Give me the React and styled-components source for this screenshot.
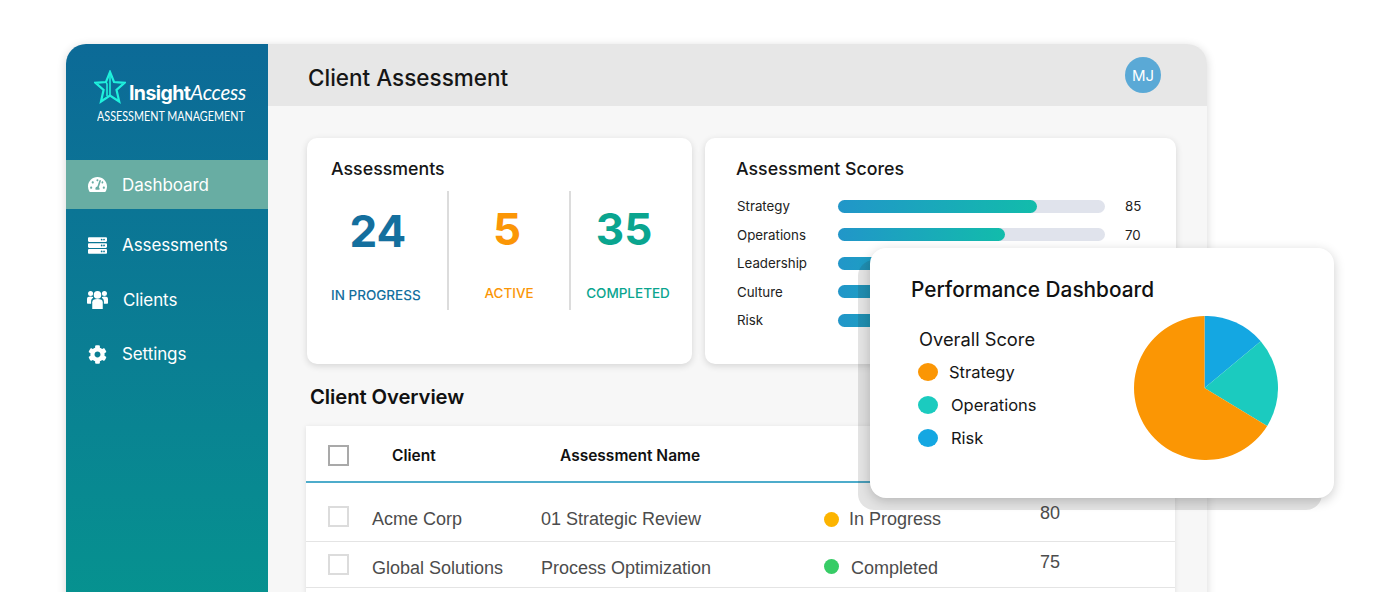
import React from "react";
import styled, { createGlobalStyle } from "styled-components";
import { FaTachometerAlt, FaServer, FaCog } from "react-icons/fa";

const GlobalStyle = createGlobalStyle`
  html, body {
    margin: 0;
    background: #fff;
    font-family: "Inter", "Liberation Sans", sans-serif;
  }
`;

const Page = styled.div`
  position: relative;
  width: 1394px;
  height: 592px;
  padding: 44px 0 0 66px;
  box-sizing: border-box;
  overflow: hidden;
`;

const AppWindow = styled.div`
  display: flex;
  width: 1141px;
  height: 640px;
  border-radius: 20px 20px 0 0;
  overflow: hidden;
  background: #f7f7f7;
  box-shadow: 0 2px 10px rgba(0, 0, 0, 0.16);
`;

const Sidebar = styled.aside`
  width: 202px;
  flex: none;
  color: #fff;
  background: linear-gradient(180deg, #0c6a97 0%, #0a7f93 50%, #05998e 100%);
`;

const Brand = styled.div`
  height: 116px;
  box-sizing: border-box;
  padding: 26px 0 0 28px;
`;

const BrandTop = styled.div`
  display: flex;
  align-items: flex-end;
  height: 34px;
`;

const BrandName = styled.div`
  font-size: 19.5px;
  line-height: 24px;
  margin: 0 0 -1px 3px;
  letter-spacing: -0.6px;
  b {
    font-weight: 700;
  }
  i {
    font-family: "Lato", sans-serif;
    font-weight: 400;
    letter-spacing: -0.2px;
    font-size: 20.5px;
  }
`;

const BrandSub = styled.div`
  font-family: "Lato", sans-serif;
  font-size: 14px;
  line-height: 16px;
  margin: 4px 0 0 3px;
  white-space: nowrap;
  transform: scaleX(0.77);
  transform-origin: left center;
`;

const NavItem = styled.div`
  display: flex;
  align-items: center;
  gap: 15px;
  height: ${(p) => (p.$active ? "49px" : "54.5px")};
  padding-left: 22px;
  margin-bottom: ${(p) => (p.$active ? "9px" : "0")};
  font-size: 17px;
  letter-spacing: -0.1px;
  background: ${(p) => (p.$active ? "#68ada3" : "transparent")};
  svg {
    width: 19px;
    height: 19px;
    flex: none;
  }
`;

const Main = styled.main`
  flex: 1;
  min-width: 0;
`;

const TopBar = styled.header`
  display: flex;
  align-items: center;
  justify-content: space-between;
  height: 62px;
  padding: 0 46px 0 40px;
  background: #e7e7e7;
`;

const PageTitle = styled.h1`
  margin: 4px 0 0;
  font-size: 22.5px;
  font-weight: 500;
  color: #161616;
`;

const Avatar = styled.div`
  display: flex;
  align-items: center;
  justify-content: center;
  width: 36px;
  height: 36px;
  border-radius: 50%;
  font-size: 15px;
  color: #fff;
  background: #5aa9d6;
`;

const Content = styled.div`
  padding: 32px 32px 0 38px;
`;

const Cards = styled.div`
  display: grid;
  grid-template-columns: 385px 471px;
  gap: 13px;
  padding-left: 1px;
`;

const Card = styled.section`
  height: 226px;
  box-sizing: border-box;
  border-radius: 10px;
  background: #fff;
  box-shadow: 0 2px 7px rgba(0, 0, 0, 0.14);
  padding: ${(p) => p.$padding};
`;

const CardTitle = styled.h2`
  margin: 0;
  font-size: 17.8px;
  line-height: 24px;
  font-weight: 500;
  color: #161616;
`;

const StatRow = styled.div`
  display: grid;
  grid-template-columns: 118px 122px 114px;
  margin-top: 10px;
  height: 119px;
`;

const Stat = styled.div`
  display: flex;
  flex-direction: column;
  align-items: ${(p) => p.$align || "center"};
  border-right: ${(p) => (p.$divider ? "2px solid #dcdcdc" : "none")};
  color: ${(p) => p.$color};
`;

const StatValue = styled.div`
  font-size: 44px;
  line-height: 56px;
  font-weight: 700;
  margin-top: ${(p) => p.$top};
  margin-right: ${(p) => p.$shift || "0"};
  width: ${(p) => p.$width || "auto"};
  text-align: center;
`;

const StatLabel = styled.div`
  font-size: 13.5px;
  line-height: 18px;
  font-weight: 500;
  margin-top: ${(p) => p.$top};
  white-space: nowrap;
`;

const ScoreRows = styled.div`
  margin-top: 11px;
  padding-left: 1px;
`;

const ScoreRow = styled.div`
  display: grid;
  grid-template-columns: 101px 267px 1fr;
  align-items: center;
  height: 28.5px;
  font-size: 13.3px;
  color: #222;
`;

const Track = styled.div`
  height: 13px;
  border-radius: 7px;
  background: #e0e3ec;
`;

const Fill = styled.div`
  height: 100%;
  border-radius: 7px;
  background: linear-gradient(90deg, #2196c9, #12bcab);
`;

const ScoreValue = styled.span`
  padding-left: 20px;
`;

const SectionTitle = styled.h2`
  margin: 20px 0 0 4px;
  font-size: 20.3px;
  line-height: 26px;
  font-weight: 600;
  letter-spacing: -0.1px;
  color: #111;
`;

const Table = styled.div`
  height: 300px;
  margin-top: 16px;
  background: #fff;
  box-shadow: 0 1px 5px rgba(0, 0, 0, 0.1);
`;

const HeadRow = styled.div`
  display: grid;
  grid-template-columns: 86px 168px 1fr;
  align-items: center;
  height: 57px;
  box-sizing: border-box;
  padding-top: 4px;
  border-bottom: 2px solid #4daccb;
  font-size: 15.5px;
  font-weight: 600;
  color: #111;
`;

const BodyRow = styled.div`
  display: grid;
  grid-template-columns: 66px 169px 283px 216px 1fr;
  align-items: center;
  height: ${(p) => p.$height};
  padding-top: ${(p) => p.$top};
  box-sizing: border-box;
  border-bottom: 1.5px solid #e4e4e4;
  font-family: "Liberation Sans", sans-serif;
  font-size: 18px;
  color: #4c4c4c;
`;

const Check = styled.span`
  display: block;
  box-sizing: border-box;
  width: 21px;
  height: 21px;
  margin-left: 22px;
  margin-bottom: ${(p) => p.$lift || "0"};
  border: ${(p) => (p.$head ? "2px solid #a9a9a9" : "2px solid #dcdcdc")};
`;

const Status = styled.div`
  display: flex;
  align-items: center;
  gap: ${(p) => p.$gap};
`;

const Dot = styled.span`
  width: 15px;
  height: 15px;
  border-radius: 50%;
  margin-bottom: ${(p) => p.$lift || "0"};
  background: ${(p) => p.$color};
`;

const Score = styled.span`
  padding-bottom: 12px;
`;

const PopupLayer = styled.div`
  position: absolute;
  inset: 0;
  isolation: isolate;
  pointer-events: none;
`;

const Popup = styled.div`
  position: absolute;
  left: 870px;
  top: 248px;
  width: 464px;
  height: 250px;
  box-sizing: border-box;
  padding: 28px 0 0 41px;
  border-radius: 16px;
  background: #fff;
  box-shadow: 0 3px 12px rgba(0, 0, 0, 0.2);
  &::before {
    content: "";
    position: absolute;
    left: -12px;
    top: 12px;
    width: 100%;
    height: 100%;
    border-radius: 16px;
    background: rgba(40, 40, 40, 0.13);
    z-index: -1;
  }
`;

const PopupTitle = styled.h2`
  margin: 0;
  font-size: 20.8px;
  line-height: 28px;
  font-weight: 500;
  color: #111;
`;

const PopupBody = styled.div`
  display: flex;
  justify-content: space-between;
  padding-right: 56px;
`;

const LegendTitle = styled.div`
  margin: 23px 0 0 8px;
  font-size: 18.3px;
  line-height: 24px;
  color: #161616;
`;

const Legend = styled.div`
  display: flex;
  flex-direction: column;
  margin-top: 4px;
`;

const LegendRow = styled.div`
  display: flex;
  align-items: center;
  gap: ${(p) => p.$gap};
  height: 33px;
  margin-left: 7px;
  font-size: 16.5px;
  color: #161616;
`;

const Swatch = styled.span`
  width: 20px;
  height: 18px;
  border-radius: 50%;
  background: ${(p) => p.$color};
`;

const PieChart = styled.svg`
  display: block;
  margin-top: 12px;
  flex: none;
`;

const scores = [
  { name: "Strategy", value: 85, pct: 74.5 },
  { name: "Operations", value: 70, pct: 62.5 },
  { name: "Leadership", value: "", pct: 62 },
  { name: "Culture", value: "", pct: 60 },
  { name: "Risk", value: "", pct: 55 },
];

const LogoStar = () => (
  <svg width="32" height="34" viewBox="0 0 32 34" fill="none" stroke="#1ff0dc" strokeWidth="2.2">
    <path d="M16 2 L20 12 L30.5 12.8 L22.5 19.8 L25.2 31.5 L16 25.5 L7 31.5 L9.6 19.8 L1.5 12.8 L12 12 Z" />
    <path d="M16 2 V25.5 M12 12 L13 14 V26" strokeWidth="1.6" />
  </svg>
);

const ClientsIcon = () => (
  <svg viewBox="0 0 20 20" fill="currentColor" style={{ width: 21, height: 21, marginLeft: -1 }}>
    <circle cx="10" cy="5.6" r="3.6" />
    <circle cx="3.4" cy="4.2" r="2.4" />
    <circle cx="16.6" cy="4.2" r="2.4" />
    <path d="M5 19 V12.5 C5 10.4 6.6 9.6 10 9.6 C13.4 9.6 15 10.4 15 12.5 V19 Z" />
    <path d="M0 13 V9.5 C0 7.8 1.2 7.2 3.4 7.2 C4.4 7.2 5.2 7.4 5.7 7.7 C6 8 5.9 8.6 5.4 8.9 C4.4 9.6 3.9 10.6 3.9 12 V14 H1 C0.4 14 0 13.6 0 13 Z" />
    <path d="M20 13 V9.5 C20 7.8 18.8 7.2 16.6 7.2 C15.6 7.2 14.8 7.4 14.3 7.7 C14 8 14.1 8.6 14.6 8.9 C15.6 9.6 16.1 10.6 16.1 12 V14 H19 C19.6 14 20 13.6 20 13 Z" />
  </svg>
);

const Sector = ({ from, to, color }) => {
  const point = (deg) => {
    if (deg === 0 || deg === 360) return "70.5 0";
    const rad = (deg * Math.PI) / 180;
    return `${72 + 72 * Math.sin(rad)} ${72 - 72 * Math.cos(rad)}`;
  };
  return (
    <path
      d={`M70.5 72 L${point(from)} A72 72 0 ${to - from > 180 ? 1 : 0} 1 ${point(to)} Z`}
      fill={color}
    />
  );
};

export default function App() {
  return (
    <Page>
      <GlobalStyle />
      <AppWindow>
        <Sidebar>
          <Brand>
            <BrandTop>
              <LogoStar />
              <BrandName>
                <b>Insight</b>
                <i>Access</i>
              </BrandName>
            </BrandTop>
            <BrandSub>ASSESSMENT MANAGEMENT</BrandSub>
          </Brand>
          <NavItem $active>
            <FaTachometerAlt />
            Dashboard
          </NavItem>
          <NavItem>
            <FaServer />
            Assessments
          </NavItem>
          <NavItem>
            <ClientsIcon />
            Clients
          </NavItem>
          <NavItem>
            <FaCog />
            Settings
          </NavItem>
        </Sidebar>
        <Main>
          <TopBar>
            <PageTitle>Client Assessment</PageTitle>
            <Avatar>MJ</Avatar>
          </TopBar>
          <Content>
            <Cards>
              <Card $padding="19px 0 0 24px">
                <CardTitle>Assessments</CardTitle>
                <StatRow>
                  <Stat $divider $color="#146f9e" $align="flex-start">
                    <StatValue $width="94px" $top="12px">24</StatValue>
                    <StatLabel $top="27px">IN PROGRESS</StatLabel>
                  </Stat>
                  <Stat $divider $color="#fb9606">
                    <StatValue $top="10px" $shift="4px">5</StatValue>
                    <StatLabel $top="27px">ACTIVE</StatLabel>
                  </Stat>
                  <Stat $color="#0aa58f">
                    <StatValue $top="10px" $shift="8px">35</StatValue>
                    <StatLabel $top="27px">COMPLETED</StatLabel>
                  </Stat>
                </StatRow>
              </Card>
              <Card $padding="19px 34px 0 31px">
                <CardTitle>Assessment Scores</CardTitle>
                <ScoreRows>
                  {scores.map((s) => (
                    <ScoreRow key={s.name}>
                      <span>{s.name}</span>
                      <Track>
                        <Fill style={{ width: `${s.pct}%` }} />
                      </Track>
                      <ScoreValue>{s.value}</ScoreValue>
                    </ScoreRow>
                  ))}
                </ScoreRows>
              </Card>
            </Cards>
            <SectionTitle>Client Overview</SectionTitle>
            <Table>
              <HeadRow>
                <Check $head />
                <span>Client</span>
                <span>Assessment Name</span>
              </HeadRow>
              <BodyRow $height="58.5px" $top="15px">
                <Check $lift="6px" />
                <span>Acme Corp</span>
                <span>01 Strategic Review</span>
                <Status $gap="10px">
                  <Dot $color="#fcb400" />
                  In Progress
                </Status>
                <Score>80</Score>
              </BodyRow>
              <BodyRow $height="46px" $top="8px">
                <Check $lift="8px" />
                <span>Global Solutions</span>
                <span>Process Optimization</span>
                <Status $gap="12px">
                  <Dot $color="#37cc66" $lift="4px" />
                  Completed
                </Status>
                <Score>75</Score>
              </BodyRow>
            </Table>
          </Content>
        </Main>
      </AppWindow>
      <PopupLayer>
        <Popup>
          <PopupTitle>Performance Dashboard</PopupTitle>
          <PopupBody>
            <div>
              <LegendTitle>Overall Score</LegendTitle>
              <Legend>
                <LegendRow $gap="11px">
                  <Swatch $color="#fb9604" />
                  Strategy
                </LegendRow>
                <LegendRow $gap="13px">
                  <Swatch $color="#1bcbbf" />
                  Operations
                </LegendRow>
                <LegendRow $gap="13px">
                  <Swatch $color="#14a7e2" />
                  Risk
                </LegendRow>
              </Legend>
            </div>
            <PieChart width="144" height="144" viewBox="0 0 144 144">
              <Sector from={0} to={49.5} color="#14a7e2" />
              <Sector from={49.5} to={121.8} color="#1bcbbf" />
              <Sector from={121.8} to={360} color="#fb9604" />
            </PieChart>
          </PopupBody>
        </Popup>
      </PopupLayer>
    </Page>
  );
}
